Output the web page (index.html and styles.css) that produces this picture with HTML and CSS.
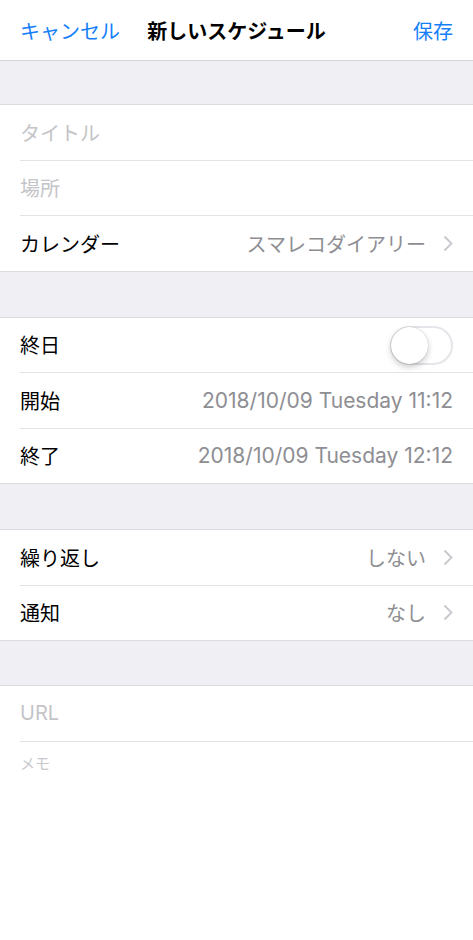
FILE: index.html
```html
<!DOCTYPE html>
<html lang="ja">
<head>
    <meta charset="UTF-8">
    <meta name="viewport" content="width=device-width, initial-scale=1.0">
    <title>新しいスケジュール</title>
    <link rel="stylesheet" href="styles.css">
</head>
<body>
    <div class="navbar">
        <span class="nav-btn">キャンセル</span>
        <span class="nav-title">新しいスケジュール</span>
        <span class="nav-btn">保存</span>
    </div>

    <div class="gap gap-first"></div>
    <div class="group">
        <div class="row"><span class="placeholder">タイトル</span></div>
        <div class="row"><span class="placeholder">場所</span></div>
        <div class="row">
            <span class="label">カレンダー</span>
            <span class="value">スマレコダイアリー</span>
            <svg class="chevron" width="10" height="17" viewBox="0 0 10 17"><path d="M1.5 1.5l7 7-7 7" fill="none" stroke="#c7c7cc" stroke-width="1.8"/></svg>
        </div>
    </div>

    <div class="gap"></div>
    <div class="group">
        <div class="row">
            <span class="label">終日</span>
            <div class="toggle"><div class="knob"></div></div>
        </div>
        <div class="row">
            <span class="label">開始</span>
            <span class="value date">2018/10/09 Tuesday 11:12</span>
        </div>
        <div class="row">
            <span class="label">終了</span>
            <span class="value date">2018/10/09 Tuesday 12:12</span>
        </div>
    </div>

    <div class="gap"></div>
    <div class="group">
        <div class="row">
            <span class="label">繰り返し</span>
            <span class="value">しない</span>
            <svg class="chevron" width="10" height="17" viewBox="0 0 10 17"><path d="M1.5 1.5l7 7-7 7" fill="none" stroke="#c7c7cc" stroke-width="1.8"/></svg>
        </div>
        <div class="row">
            <span class="label">通知</span>
            <span class="value">なし</span>
            <svg class="chevron" width="10" height="17" viewBox="0 0 10 17"><path d="M1.5 1.5l7 7-7 7" fill="none" stroke="#c7c7cc" stroke-width="1.8"/></svg>
        </div>
    </div>

    <div class="gap gap-last"></div>
    <div class="group group-open">
        <div class="row"><span class="placeholder">URL</span></div>
        <div class="memo"><span class="placeholder small">メモ</span></div>
    </div>
</body>
</html>
```

FILE: styles.css
```css
body {
    margin: 0;
    background: white;
    font-family: Inter, "Noto Sans CJK JP", sans-serif;
    font-size: 20px;
    color: #000;
}
.navbar {
    height: 60px;
    display: flex;
    align-items: center;
    justify-content: space-between;
    padding: 0 20px;
    border-bottom: 1px solid #d6d6da;
    position: relative;
}
.nav-btn {
    color: #147efb;
}
.nav-title {
    font-weight: bold;
    position: absolute;
    left: 0;
    right: 0;
    text-align: center;
    pointer-events: none;
}
.gap {
    height: 45px;
    background: #efeff4;
}
.gap-first {
    height: 43px;
}
.gap-last {
    height: 44px;
}
.group {
    background: white;
    border-top: 1px solid #dcdce0;
    border-bottom: 1px solid #dcdce0;
}
.group-open {
    border-bottom: none;
}
.row {
    height: 54.5px;
    margin-left: 20px;
    padding-right: 20px;
    display: flex;
    align-items: center;
    border-bottom: 1px solid #e3e3e6;
}
.group > .row:last-child {
    border-bottom: none;
}
.label {
    flex: 1;
}
.value {
    color: #8e8e93;
}
.date {
    font-size: 21px;
}
.placeholder {
    color: #c4c4c8;
}
.small {
    font-size: 15px;
    color: #c8c8cc;
}
.chevron {
    margin-left: 17px;
}
.memo {
    padding: 8px 20px;
}
.toggle {
    box-sizing: border-box;
    width: 63px;
    height: 39px;
    border: 2px solid #e5e5ea;
    border-radius: 20px;
    position: relative;
    margin-top: 1px;
}
.knob {
    position: absolute;
    left: -1px;
    top: -1px;
    width: 37px;
    height: 37px;
    border-radius: 50%;
    background: white;
    box-shadow: 0 3px 6px rgba(0, 0, 0, 0.22), 0 0 1px rgba(0, 0, 0, 0.25);
}
```
